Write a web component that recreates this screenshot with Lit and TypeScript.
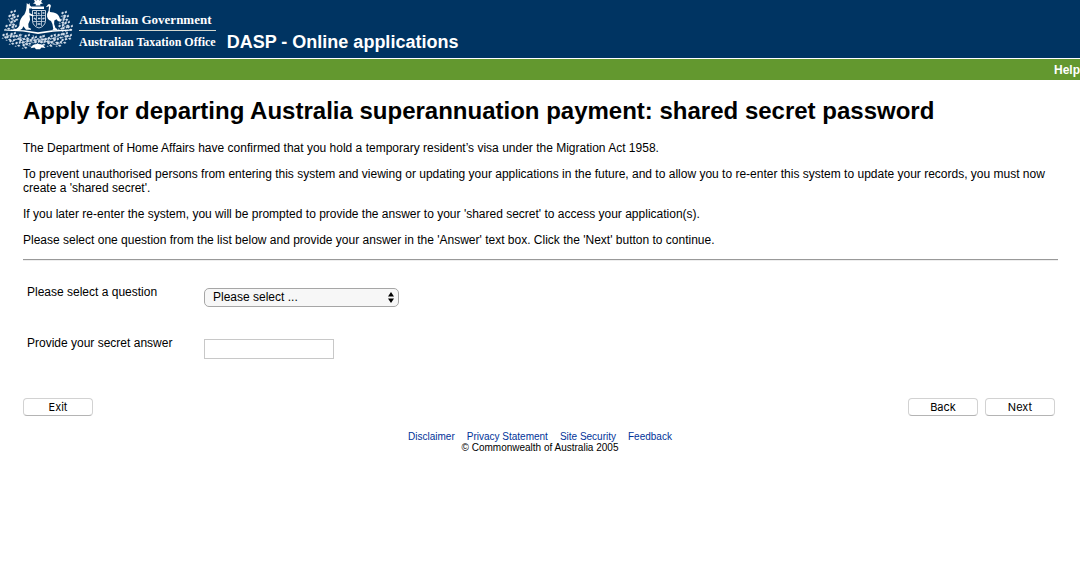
import { LitElement, html, svg, css } from "lit";
import { customElement } from "lit/decorators.js";

@customElement("coat-of-arms")
class CoatOfArms extends LitElement {
  static styles = css`
    :host { display: block; flex: none; width: 79px; height: 52px; }
    svg { display: block; }
  `;

  sprig(x: number, y: number) {
    return svg`<g transform="translate(${x} ${y})">
      <path d="M-2 0l2-1.500 1 1.500-1.500 1.500zM1.500-1l2-1.500.500 2-1.500 1zM0 2.500l2-1 1.500 1.500-2 .8zM-2.500 3.200l1.500-.7.500 1.500z" />
    </g>`;
  }

  render() {
    return html`<svg width="76" height="52" viewBox="0 0 76 52" role="img" aria-label="Commonwealth Coat of Arms">
      <g fill="none" stroke="#b5c7da" stroke-width=".8">
        <path d="M14 29q-2-7-1-15M62 29q2-7 1-14M14 26q-4-2-5-6M62 26q4-2 5-6" />
        <path d="M4 37q8-4 15 0t13 3 14-1 12-3 13 1M12 42q6-6 13 1t13 0 12-1 12-1M24 47q3-8 7-5t7-4q1 6 6 4t8 5" />
        <path d="M22 34q-4 6 2 8q5-1 3-5M54 34q4 6-2 8q-5-1-3-5M33 35l3 8M43 35l-3 8" />
      </g>
      <g fill="#d3deea">
        ${[[12, 12], [10, 16], [15, 17], [12, 22], [7, 26], [13, 27], [4, 35], [8, 37], [12, 34], [17, 36],
          [21, 40], [11, 41], [17, 43], [26, 36], [28, 41], [24, 45], [33, 38], [36, 42], [41, 37], [42, 42],
          [46, 39], [49, 43], [52, 36], [55, 40], [58, 43], [59, 35], [64, 34], [63, 40], [68, 36],
          [63, 13], [65, 17], [61, 20], [66, 23], [60, 26], [69, 27], [64, 28]]
          .map(([x, y]) => this.sprig(x, y))}
      </g>
      <g fill="none" stroke="#c6d3e0">
        <path d="M32.500 10.500h13v11q-1 5-6.500 6.500q-5.500-1.500-6.500-6.500z" stroke-width="1" />
        <path d="M36.500 11v15M41.500 11v15M33 15.500h12M33 21.500h12" stroke-width=".8" />
        <path d="M34 13h2M38 13l1.500 1.300M42.500 13h2M34 18l2 1.500M38 18.500h2.500M42.500 19l2-1M37.500 24h3" stroke-width="1.500" />
      </g>
      <g fill="#fff">
        <path d="M38-2l1.300 2.400 2.900-.8-1.200 2.400 2 1.600-2.800.3.200 1.600h-4.800l.2-1.600-2.800-.3 2-1.600-1.200-2.400 2.900.8z" />
        <path d="M32 6.500h12v2.500H32z" />
        <path d="M26.800 3l1.500 1.400L29.400 3l.6 2.400 2.400 1.800-.3 1.200-3 .2.300 4.400 4.200 2.200-.3 1.200-3.800-1.200.6 4.600-1.800 4.200.2 3.400 2.500 1.300v1h-5l-2.600-3.500-1.200 2.600c-3 2.400-6.500 2.600-11.400 1.900v-1c4 .3 7-.8 8.600-4.200.2-5 1.400-7.800 4.800-10.800 1.500-2.800 2.200-5 2.300-8z" />
        <path d="M45.800 7.200l2.200-2.600c1.500-.9 2.800-.1 2.900 1.300-.9 2.500-1.400 4-.9 6.100l3.600.6c4 .8 6.300 3.400 7 9.200-2.200-.3-3.400-1.300-4-2.600l-2.300 1.300-.2 3.500 1.400 4.100 1.800 1v1h-5l1-1-.9-5-1.400-3.100c-3-.9-4.400-3.500-3.900-7l1.500-3.300.4-4.400-3.200.9z" />
        <path d="M4 29.500l20 .8 14 2 14-2 20-.8v1l-19 1.300-15 2.200-15-2.400-19-1.100z" />
        <path d="M33 45q5-2 10 0l2.500 3-4-.500-1.500 1.700h-4l-1.500-1.700-4 .8z" />
      </g>
    </svg>`;
  }
}

@customElement("app-root")
class AppRoot extends LitElement {
  static styles = css`
    :host {
      display: block;
      min-height: 100vh;
      background: #fff;
      color: #000;
      font: 12px/14px "Liberation Sans", Arial, sans-serif;
    }
    * { box-sizing: border-box; }
    .banner {
      display: flex;
      height: 58px;
      background: #003462;
      color: #fff;
    }
    .agency {
      margin-top: 11px;
      font: bold 13px/18px "Liberation Serif", "Times New Roman", serif;
      white-space: nowrap;
    }
    .agency div + div {
      margin-top: 1px;
      padding-top: 2px;
      border-top: 1px solid #d4d8cf;
      font-size: 12px;
    }
    .product {
      margin: 31px 0 0 11px;
      font-size: 18px;
      line-height: 22px;
      font-weight: bold;
      white-space: nowrap;
    }
    .toolbar {
      display: flex;
      justify-content: flex-end;
      align-items: center;
      height: 21px;
      margin-top: 1px;
      background: #63982f;
    }
    .toolbar a { color: #fff; font-weight: bold; text-decoration: none; }
    main { padding: 16px 22px 0 23px; }
    h1 { margin: 0; font-size: 24px; line-height: 30px; }
    p { margin: 12px 0; }
    h1 + p { margin-top: 15px; }
    hr {
      margin: 0;
      border: 0;
      border-top: 1px solid #999;
      border-bottom: 1px solid #eee;
    }
    .fields {
      display: grid;
      grid-template-columns: 177px 1fr;
      row-gap: 32px;
      align-items: start;
      padding: 27px 0 0 4px;
    }
    .fields label { margin-top: -3px; }
    .picker { display: grid; width: 195px; }
    .picker > * { grid-area: 1 / 1; }
    .picker svg { align-self: center; justify-self: end; margin-right: 5px; pointer-events: none; }
    select {
      appearance: none;
      height: 19px;
      padding: 0 20px 2px 8px;
      border: 1px solid #a6a6a6;
      border-radius: 5px;
      background: #f7f7f7;
      color: #000;
      font: inherit;
    }
    input {
      width: 130px;
      height: 20px;
      padding: 1px 3px;
      border: 1px solid #c8c8c8;
      background: #fff;
      font: inherit;
    }
    .actions { display: flex; gap: 7px; padding: 39px 3px 0 0; }
    .actions button {
      width: 70px;
      height: 18px;
      padding: 0;
      border: 1px solid #d2d2d2;
      border-bottom-color: #b4b4b4;
      border-radius: 4px;
      background: #fff;
      color: #000;
      font: 11px/14px Inter, "Liberation Sans", sans-serif;
    }
    .exit { margin-right: auto; }
    footer { padding-top: 15px; text-align: center; font-size: 10px; line-height: 11px; }
    nav { display: flex; justify-content: center; gap: 12px; }
    nav a { color: #003399; text-decoration: none; }
  `;

  render() {
    return html`
      <header>
        <div class="banner">
          <coat-of-arms></coat-of-arms>
          <div class="agency">
            <div>Australian Government</div>
            <div>Australian Taxation Office</div>
          </div>
          <div class="product">DASP - Online applications</div>
        </div>
        <div class="toolbar"><a href="#help">Help</a></div>
      </header>
      <main>
        <h1>Apply for departing Australia superannuation payment: shared secret password</h1>
        <p>The Department of Home Affairs have confirmed that you hold a temporary resident’s visa under the Migration Act 1958.</p>
        <p>To prevent unauthorised persons from entering this system and viewing or updating your applications in the future, and to allow you to re-enter this system to update your records, you must now create a 'shared secret'.</p>
        <p>If you later re-enter the system, you will be prompted to provide the answer to your 'shared secret' to access your application(s).</p>
        <p>Please select one question from the list below and provide your answer in the 'Answer' text box. Click the 'Next' button to continue.</p>
        <hr />
        <form @submit=${(e: Event) => e.preventDefault()}>
          <div class="fields">
            <label for="question">Please select a question</label>
            <div class="picker">
              <select id="question"><option>Please select ...</option></select>
              <svg width="6" height="11" viewBox="0 0 6 11" aria-hidden="true">
                <path d="M3 0l3 4.500H0zM3 11l3-4.500H0z" fill="#000" />
              </svg>
            </div>
            <label for="answer">Provide your secret answer</label>
            <input id="answer" type="text" autocomplete="off" />
          </div>
          <div class="actions">
            <button class="exit" type="button">Exit</button>
            <button type="button">Back</button>
            <button type="submit">Next</button>
          </div>
        </form>
      </main>
      <footer>
        <nav>
          <a href="#disclaimer">Disclaimer</a>
          <a href="#privacy">Privacy Statement</a>
          <a href="#security">Site Security</a>
          <a href="#feedback">Feedback</a>
        </nav>
        <div>© Commonwealth of Australia 2005</div>
      </footer>
    `;
  }
}
